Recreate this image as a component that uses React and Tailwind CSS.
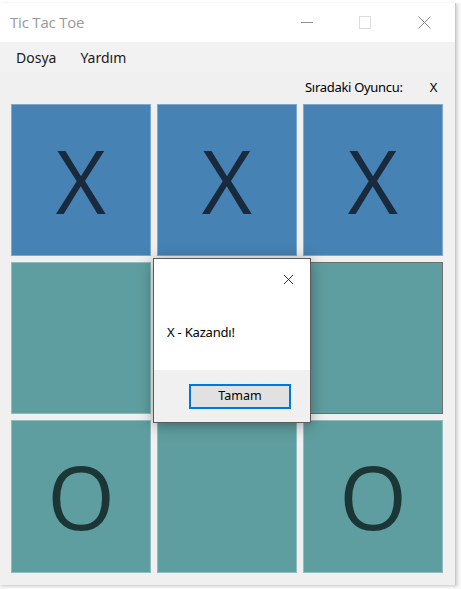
import { X } from 'lucide-react';

const cells = [
  { mark: 'X', color: 'bg-[#4682b4]', border: 'border-[#7fa8cb]' },
  { mark: 'X', color: 'bg-[#4682b4]', border: 'border-[#7fa8cb]' },
  { mark: 'X', color: 'bg-[#4682b4]', border: 'border-[#7fa8cb]' },
  { mark: '', color: 'bg-[#5f9ea0]', border: 'border-[#8fbcbe]' },
  { mark: '', color: 'bg-[#5f9ea0]', border: 'border-[#8fbcbe]' },
  { mark: '', color: 'bg-[#5f9ea0]', border: 'border-[#6e6e6e]' },
  { mark: 'O', color: 'bg-[#5f9ea0]', border: 'border-[#8fbcbe]' },
  { mark: '', color: 'bg-[#5f9ea0]', border: 'border-[#8fbcbe]' },
  { mark: 'O', color: 'bg-[#5f9ea0]', border: 'border-[#8fbcbe]' },
];

export default function App() {
  return (
    <div className="w-[461px] h-[589px] overflow-hidden bg-[#f7f7f7] font-['Open_Sans',sans-serif]">
      <div className="h-[3px] bg-white" />
      <div className="flex">
        <div className="relative w-[456px] h-[582px] bg-[#f0f0f0] border-r border-[#c8c8c8] shadow-[1px_1px_3px_rgba(0,0,0,0.2)]">
          {/* title bar */}
          <div className="h-[39px] bg-white flex items-center">
            <span className="ml-[10px] text-[15px] text-[#999999] tracking-[-0.2px]">Tic Tac Toe</span>
            <div className="ml-auto flex items-center">
              <div className="w-[12px] h-px bg-[#909090] mr-[46px]" />
              <div className="w-[12px] h-[13px] border border-[#dddddd] mr-[47px]" />
              <svg width="13" height="13" viewBox="0 0 13 13" className="mr-[24px]">
                <path d="M0.5 0.5 L12.5 12.5 M12.5 0.5 L0.5 12.5" stroke="#8a8a8a" strokeWidth="1" />
              </svg>
            </div>
          </div>

          {/* menu bar */}
          <div className="h-[30px] bg-[#f2f2f2] flex items-center text-[14px] text-[#1a1a1a] font-['Noto_Sans',sans-serif]">
            <span className="ml-[16px]">Dosya</span>
            <span className="ml-[24px]">Yardım</span>
          </div>

          {/* status */}
          <div className="h-[32px] flex items-center text-[13px] text-black font-['Noto_Sans',sans-serif] tracking-[-0.3px]">
            <span className="ml-[305px]">Sıradaki Oyuncu:</span>
            <span className="ml-[27px]">X</span>
          </div>

          {/* board */}
          <div className="grid grid-cols-[140px_140px_140px] grid-rows-[152px_152px_153px] gap-x-[6px] gap-y-[6px] pl-[11px]">
            {cells.map((c, i) => (
              <div key={i} className={`${c.color} border ${c.border} flex items-center justify-center`}>
                {c.mark && (
                  <span className={`text-[87px] leading-none ${c.mark === 'X' ? 'text-[#182a3b]' : 'text-[#1c3636]'} font-['Open_Sans',sans-serif]`}>
                    {c.mark}
                  </span>
                )}
              </div>
            ))}
          </div>

          {/* message box */}
          <div className="absolute left-[153px] top-[255px] w-[158px] h-[165px] bg-white border border-[#5a5a5a] shadow-[0_2px_14px_rgba(0,0,0,0.35)] flex flex-col">
            <div className="h-[111px] relative">
              <X className="absolute right-[13px] top-[12px]" size={17} strokeWidth={1.2} color="#111" />
              <span className="absolute left-[13px] top-[64px] text-[13px] text-black font-['Noto_Sans',sans-serif] tracking-[-0.2px]">
                X - Kazandı!
              </span>
            </div>
            <div className="flex-1 bg-[#f0f0f0] flex items-start">
              <button className="ml-[35px] mt-[14px] w-[102px] h-[25px] bg-[#e1e1e1] border-2 border-[#0078d7] text-[12.5px] text-black font-['Noto_Sans',sans-serif]">
                Tamam
              </button>
            </div>
          </div>
        </div>
      </div>
    </div>
  );
}
